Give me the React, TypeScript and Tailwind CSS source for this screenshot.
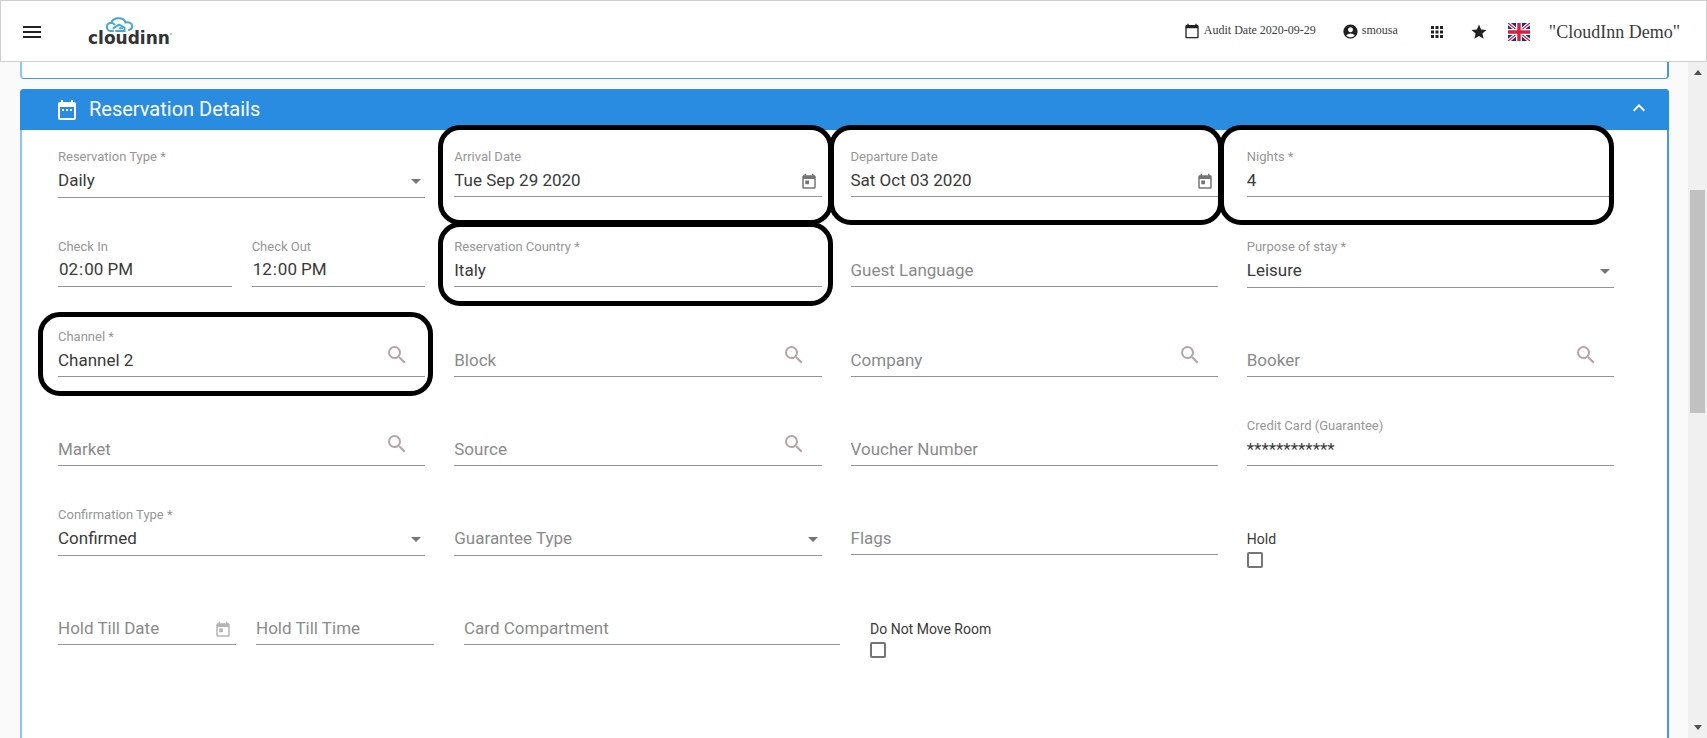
import { useState } from "react";
import type { ReactNode } from "react";
import {
  MdAccountCircle,
  MdApps,
  MdCalendarToday,
  MdDateRange,
  MdExpandLess,
  MdMenu,
  MdSearch,
  MdStar,
  MdToday,
} from "react-icons/md";

const inputStyle = "w-full border-b border-[#949494] bg-transparent text-[17px] text-[#3a3a3a] outline-none placeholder:text-[#8a8a8a] placeholder:opacity-100";

type FieldProps = {
  id: string
  label: string
  value?: string
  type?: string
  children?: ReactNode
}

function Field({ id, label, value = '', type = 'text', children }: FieldProps) {
  const [text, setText] = useState(value)

  return (
    <div className="relative mb-[39px] h-[50px]">
      <div className="h-5">
        {text && <label htmlFor={id} className="block text-[13px] leading-5 text-[#969696]">{label}</label>}
      </div>
      <input
        type={type}
        id={id}
        value={text}
        placeholder={label}
        aria-label={label}
        onChange={(e) => setText(e.target.value)}
        className={`${inputStyle} h-[30px] pb-[3px] [&::-webkit-calendar-picker-indicator]:hidden`}
      />
      {children}
    </div>
  )
}

type SelectFieldProps = {
  id: string
  label: string
  value?: string
  options: string[]
}

function SelectField({ id, label, value = '', options }: SelectFieldProps) {
  const [selected, setSelected] = useState(value)

  return (
    <div className="relative mb-[39px] h-[51px]">
      <div className="h-5">
        {selected && <label htmlFor={id} className="block text-[13px] leading-5 text-[#969696]">{label}</label>}
      </div>
      <select
        id={id}
        value={selected}
        aria-label={label}
        onChange={(e) => setSelected(e.target.value)}
        className={`${inputStyle} h-[31px] appearance-none pb-[3px] ${selected ? '' : 'text-[#8a8a8a]'}`}
      >
        {!value && <option value="">{label}</option>}
        {options.map((option) => <option key={option} value={option}>{option}</option>)}
      </select>
      <svg viewBox="0 0 10 5" className="pointer-events-none absolute right-1 top-8 h-[5px] w-[10px]">
        <path d="M0 0h10L5 5z" fill="#757575"/>
      </svg>
    </div>
  )
}

function CheckField({ id, label }: { id: string, label: string }) {
  return (
    <div className="flex flex-col items-start gap-[3px] pt-6">
      <label htmlFor={id} className="text-sm leading-5 text-[#3a3a3a]">{label}</label>
      <input type="checkbox" id={id} className="h-4 w-4 appearance-none rounded-[2px] border-2 border-[#757575] checked:bg-[#2a8ce0]"/>
    </div>
  )
}

function SearchButton({ label }: { label: string }) {
  return (
    <button type="button" aria-label={`Search ${label}`} className="absolute right-4 top-4 text-[#b5a5a5]">
      <MdSearch size={24}/>
    </button>
  )
}

function DateButton({ label, color = 'text-[#757575]' }: { label: string, color?: string }) {
  return (
    <button type="button" aria-label={`Pick ${label}`} className={`absolute right-1 top-[26px] ${color}`}>
      <MdToday size={18}/>
    </button>
  )
}

// Black frame drawn around a field, inset says how far it reaches out
function Highlight({ inset }: { inset: string }) {
  return <div className={`pointer-events-none absolute z-10 rounded-[22px] border-[5px] border-black ${inset}`}/>
}

function Logo() {
  return (
    <svg viewBox="0 0 88 36" className="h-9 w-[88px]" role="img" aria-label="cloudinn">
      <g fill="none" stroke="#46a9d3" strokeWidth="2" strokeLinecap="round">
        <path d="M25 15H22.500C20 15 18.800 12.500 18.900 10.500C19 8 21 6.600 23.500 7C24.500 6.900 25.500 7.500 26.500 8.500"/>
        <path d="M23.500 7C23.800 4 27 2.200 31 2.200C34.500 2.200 36.800 3.800 37.500 6.500C41 5.800 44.300 7 44.200 10C44.200 12 43 13.500 41 14"/>
        <path d="M25.500 12.200L31 8.600L36.500 11.500V15H28"/>
        <path d="M32 12.200H34"/>
      </g>
      <text x="0" y="28" fontFamily="DejaVu Sans" fontWeight="bold" fontSize="17" fill="#333">cloudinn</text>
      <circle cx="83" cy="18" r="0.800" fill="#777"/>
    </svg>
  )
}

function Flag() {
  return (
    <svg viewBox="0 0 22 18" className="h-[18px] w-[22px]" role="img" aria-label="English">
      <path fill="#1f3177" d="M0 0h22v18H0z"/>
      <path stroke="#fff" strokeWidth="3.600" d="M0 0l22 18M22 0L0 18"/>
      <path stroke="#d5213f" strokeWidth="1.300" d="M0 0l22 18M22 0L0 18"/>
      <path stroke="#fff" strokeWidth="6" d="M11 0v18M0 9h22"/>
      <path stroke="#d5213f" strokeWidth="3.400" d="M11 0v18M0 9h22"/>
    </svg>
  )
}

function NavBar() {
  return (
    <header className="flex h-[62px] shrink-0 items-center border border-[#cfcfcf] bg-white pl-[19px] pr-[26px] text-[#212121]">
      <button type="button" aria-label="Menu" className="pt-0.5"><MdMenu size={24}/></button>
      <div className="ml-11 pt-1.5"><Logo/></div>
      <div className="ml-auto flex items-center font-['Liberation_Serif',serif] text-[#3a3a3a]">
        <span className="flex items-center gap-1 text-xs leading-4">
          <MdCalendarToday size={16} className="text-[#212121]"/>
          <span className="pb-0.5">Audit Date 2020-09-29</span>
        </span>
        <a href="#" className="ml-[26px] flex items-center gap-[3px] text-xs leading-4">
          <MdAccountCircle size={17} className="text-[#212121]"/>
          <span className="pb-0.5">smousa</span>
        </a>
        <button type="button" aria-label="Apps" className="ml-[30px] pt-0.5 text-[#212121]"><MdApps size={18}/></button>
        <button type="button" aria-label="Favourites" className="ml-6 pt-0.5 text-[#212121]"><MdStar size={18}/></button>
        <button type="button" aria-label="Language" className="ml-5 pt-0.5"><Flag/></button>
        <span className="ml-[19px] pt-0.5 text-lg leading-6">"CloudInn Demo"</span>
      </div>
    </header>
  )
}

function ScrollBar() {
  return (
    <div className="flex w-[19px] shrink-0 flex-col items-center bg-[#f0f0f0]">
      <svg viewBox="0 0 8 5" className="mt-2 h-[5px] w-2"><path d="M0 5h8L4 0z" fill="#505050"/></svg>
      <div className="mt-[115px] h-[223px] w-[15px] bg-[#c1c1c1]"/>
      <svg viewBox="0 0 8 5" className="mb-2 mt-auto h-[5px] w-2"><path d="M0 0h8L4 5z" fill="#505050"/></svg>
    </div>
  )
}

export default function App() {
  return (
    <div className="flex h-screen flex-col overflow-hidden bg-[#fafafa] font-[Roboto,sans-serif]">
      <NavBar/>
      <div className="flex min-h-0 flex-1">
        <main className="flex min-w-0 flex-1 flex-col overflow-hidden pl-5 pr-[19px]">
          <div className="h-[17px] shrink-0 rounded-b border-x-2 border-b border-[#429ae6] border-l-[#8cc4f2] bg-white"/>

          <section className="mt-[10px] flex-1 rounded-t border-x-2 border-[#429ae6] border-l-[#8cc4f2] bg-white">
            <div className="-mx-0.5 flex h-[41px] items-center rounded-t bg-[#2a8ce0] pl-[35px] pr-[18px] text-white">
              <MdDateRange size={24}/>
              <h2 className="ml-[10px] pb-0.5 text-xl">Reservation Details</h2>
              <button type="button" aria-label="Collapse" className="ml-auto pb-1"><MdExpandLess size={24}/></button>
            </div>

            <form>
              <div className="grid grid-cols-4 gap-x-[29px] pl-9 pr-[53px] pt-[17px]">
                <SelectField id="reservationType" label="Reservation Type *" value="Daily" options={['Daily', 'Monthly']}/>
                <Field id="arrival" label="Arrival Date" value="Tue Sep 29 2020">
                  <DateButton label="Arrival Date"/>
                  <Highlight inset="-left-4 -right-[11px] -top-[22px] -bottom-7"/>
                </Field>
                <Field id="departure" label="Departure Date" value="Sat Oct 03 2020">
                  <DateButton label="Departure Date"/>
                  <Highlight inset="-left-[22px] -right-[5px] -top-[22px] -bottom-7"/>
                </Field>
                <Field id="nights" label="Nights *" value="4">
                  <Highlight inset="-left-7 right-0 -top-[22px] -bottom-7"/>
                </Field>

                <div className="grid grid-cols-2 gap-5">
                  <Field id="checkIn" label="Check In" value="14:00" type="time"/>
                  <Field id="checkOut" label="Check Out" value="12:00" type="time"/>
                </div>
                <Field id="country" label="Reservation Country *" value="Italy">
                  <Highlight inset="-left-4 -right-[11px] -top-[15px] -bottom-[19px]"/>
                </Field>
                <Field id="language" label="Guest Language"/>
                <SelectField id="purpose" label="Purpose of stay *" value="Leisure" options={['Leisure', 'Business']}/>

                <Field id="channel" label="Channel *" value="Channel 2">
                  <SearchButton label="Channel"/>
                  <Highlight inset="-left-5 -right-2 -top-[15px] -bottom-[19px]"/>
                </Field>
                <Field id="block" label="Block"><SearchButton label="Block"/></Field>
                <Field id="company" label="Company"><SearchButton label="Company"/></Field>
                <Field id="booker" label="Booker"><SearchButton label="Booker"/></Field>

                <Field id="market" label="Market"><SearchButton label="Market"/></Field>
                <Field id="source" label="Source"><SearchButton label="Source"/></Field>
                <Field id="voucher" label="Voucher Number"/>
                <Field id="creditCard" label="Credit Card (Guarantee)" value="************"/>

                <SelectField id="confirmationType" label="Confirmation Type *" value="Confirmed" options={['Confirmed', 'Tentative']}/>
                <SelectField id="guaranteeType" label="Guarantee Type" options={['Credit Card', 'Company']}/>
                <Field id="flags" label="Flags"/>
                <CheckField id="hold" label="Hold"/>
              </div>

              <div className="grid grid-cols-4 gap-x-[30px] pl-9 pr-[15px]">
                <div className="grid grid-cols-2 gap-5">
                  <Field id="holdTillDate" label="Hold Till Date">
                    <DateButton label="Hold Till Date" color="text-[#b5b5b5]"/>
                  </Field>
                  <Field id="holdTillTime" label="Hold Till Time"/>
                </div>
                <Field id="cardCompartment" label="Card Compartment"/>
                <CheckField id="doNotMove" label="Do Not Move Room"/>
              </div>
            </form>
          </section>
        </main>
        <ScrollBar/>
      </div>
    </div>
  )
}
